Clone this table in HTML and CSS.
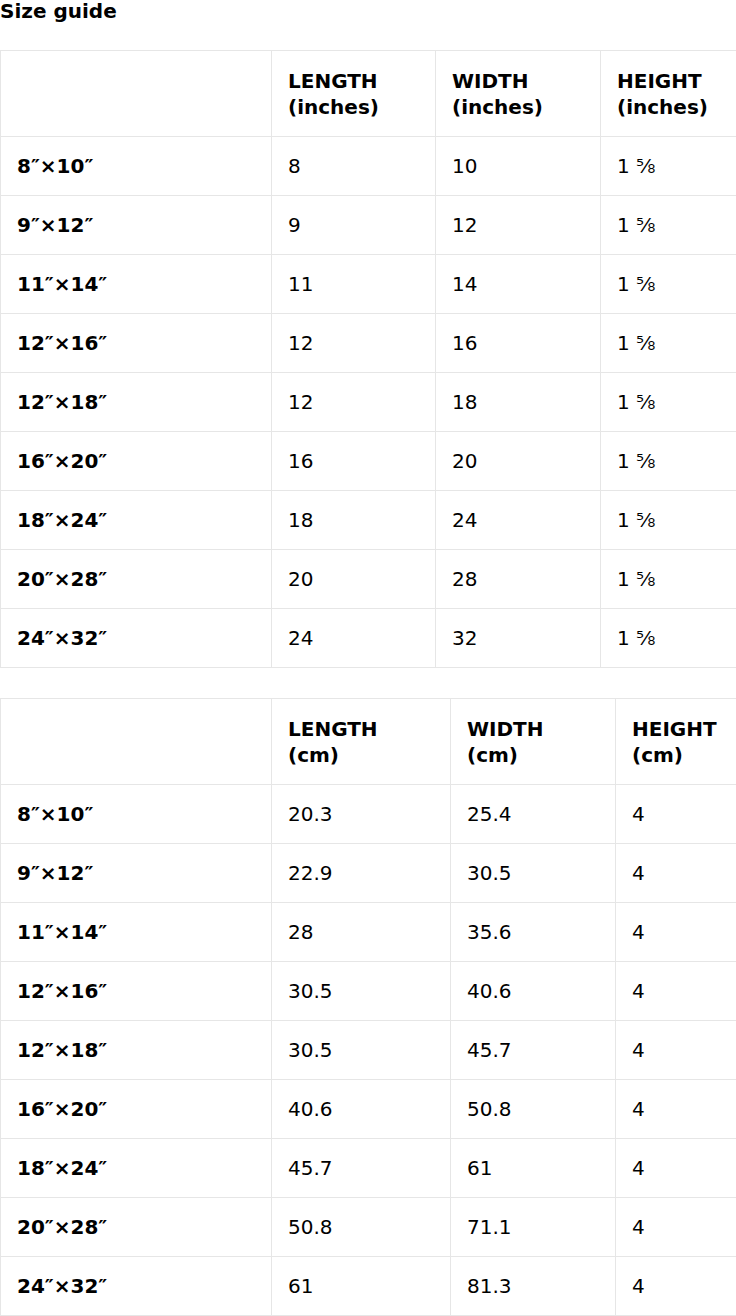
FILE: index.html
```html
<!DOCTYPE html>
<html lang="en">
<head>
<meta charset="utf-8">
<title>Size guide</title>
<link rel="stylesheet" href="styles.css">
</head>
<body>
<div class="page">
  <h2 class="title">Size guide</h2>
  <div class="table-wrap">
    <table class="size-table inches">
      <thead>
        <tr>
          <th class="c1"></th>
          <th class="c2">LENGTH<br>(inches)</th>
          <th class="c3">WIDTH<br>(inches)</th>
          <th class="c4">HEIGHT<br>(inches)</th>
        </tr>
      </thead>
      <tbody>
        <tr><th>8″×10″</th><td>8</td><td>10</td><td>1 ⅝</td></tr>
        <tr><th>9″×12″</th><td>9</td><td>12</td><td>1 ⅝</td></tr>
        <tr><th>11″×14″</th><td>11</td><td>14</td><td>1 ⅝</td></tr>
        <tr><th>12″×16″</th><td>12</td><td>16</td><td>1 ⅝</td></tr>
        <tr><th>12″×18″</th><td>12</td><td>18</td><td>1 ⅝</td></tr>
        <tr><th>16″×20″</th><td>16</td><td>20</td><td>1 ⅝</td></tr>
        <tr><th>18″×24″</th><td>18</td><td>24</td><td>1 ⅝</td></tr>
        <tr><th>20″×28″</th><td>20</td><td>28</td><td>1 ⅝</td></tr>
        <tr><th>24″×32″</th><td>24</td><td>32</td><td>1 ⅝</td></tr>
      </tbody>
    </table>
    <table class="size-table cm">
      <thead>
        <tr>
          <th class="c1"></th>
          <th class="c2">LENGTH<br>(cm)</th>
          <th class="c3">WIDTH<br>(cm)</th>
          <th class="c4">HEIGHT<br>(cm)</th>
        </tr>
      </thead>
      <tbody>
        <tr><th>8″×10″</th><td>20.3</td><td>25.4</td><td>4</td></tr>
        <tr><th>9″×12″</th><td>22.9</td><td>30.5</td><td>4</td></tr>
        <tr><th>11″×14″</th><td>28</td><td>35.6</td><td>4</td></tr>
        <tr><th>12″×16″</th><td>30.5</td><td>40.6</td><td>4</td></tr>
        <tr><th>12″×18″</th><td>30.5</td><td>45.7</td><td>4</td></tr>
        <tr><th>16″×20″</th><td>40.6</td><td>50.8</td><td>4</td></tr>
        <tr><th>18″×24″</th><td>45.7</td><td>61</td><td>4</td></tr>
        <tr><th>20″×28″</th><td>50.8</td><td>71.1</td><td>4</td></tr>
        <tr><th>24″×32″</th><td>61</td><td>81.3</td><td>4</td></tr>
      </tbody>
    </table>
  </div>
</div>
</body>
</html>
```

FILE: styles.css
```css
html, body {
  margin: 0;
  padding: 0;
  background: #ffffff;
}

body {
  font-family: "DejaVu Sans", "Liberation Sans", sans-serif;
  font-size: 20px;
  line-height: 26px;
  color: #000000;
}

.page {
  overflow: hidden;
  width: 736px;
}

.title {
  margin: 0 0 28px 0;
  font-size: 20px;
  line-height: 22px;
  font-weight: bold;
}

.table-wrap {
  display: flex;
  flex-direction: column;
  gap: 30px;
  overflow: hidden;
}

.size-table {
  border-collapse: separate;
  border-spacing: 0;
  table-layout: fixed;
  border-top: 1px solid #e6e6e6;
  border-left: 1px solid #e6e6e6;
  flex: none;
}

.size-table th,
.size-table td {
  box-sizing: border-box;
  padding: 16px 16px;
  border-right: 1px solid #e6e6e6;
  border-bottom: 1px solid #e6e6e6;
  text-align: left;
  vertical-align: top;
  font-size: 20px;
  line-height: 26px;
}

.size-table thead th {
  padding-top: 17px;
  padding-bottom: 16px;
}

.size-table th {
  font-weight: bold;
}

.size-table td {
  font-weight: normal;
}

.inches {
  width: 761px;
}

.inches .c1 { width: 271px; }
.inches .c2 { width: 164px; }
.inches .c3 { width: 165px; }
.inches .c4 { width: 160px; }

.cm {
  width: 776px;
}

.cm .c1 { width: 271px; }
.cm .c2 { width: 179px; }
.cm .c3 { width: 165px; }
.cm .c4 { width: 160px; }
```
